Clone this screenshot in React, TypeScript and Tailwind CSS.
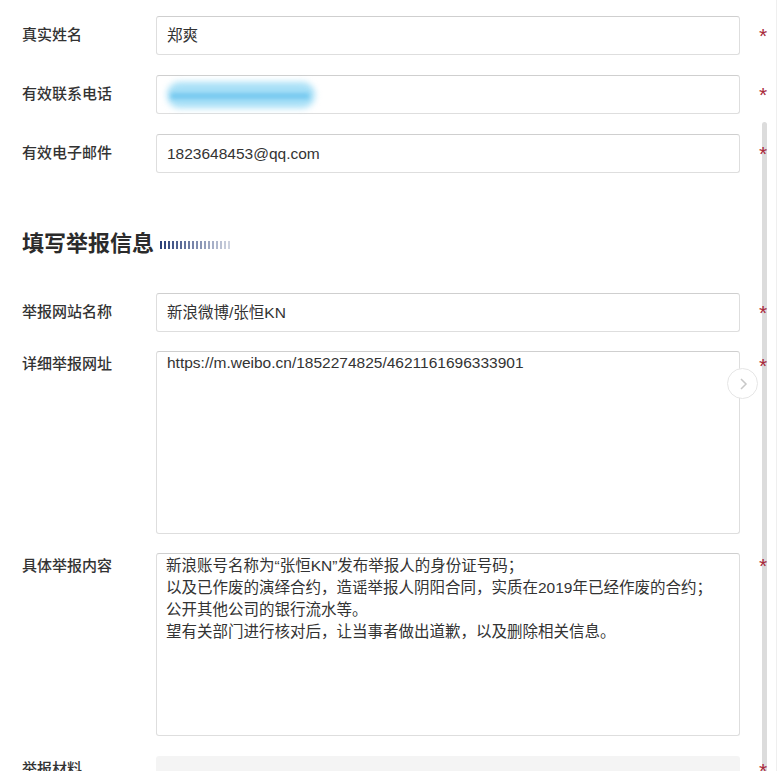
import React from 'react';

const font = { fontFamily: '"Liberation Sans", "Noto Sans CJK SC", sans-serif' };

const Star: React.FC = () => (
  <span className="w-[40px] pl-[19px] text-[21px] leading-none text-[#a8283a] relative z-10">*</span>
);

const Label: React.FC<{ children: React.ReactNode; top?: boolean }> = ({ children, top }) => (
  <div className={`w-[156px] shrink-0 pl-[22px] text-[15px] font-medium text-[#333] ${top ? 'pt-[2px]' : ''}`}>{children}</div>
);

const inputBox = 'w-[584px] shrink-0 border border-[#dedede] border-t-[#cfcfcf] rounded-[3px] bg-white text-[15.5px] text-[#333]';

const Row: React.FC<{ label: string; children?: React.ReactNode; className?: string }> = ({ label, children, className }) => (
  <div className={`flex items-center ${className ?? ''}`}>
    <Label>{label}</Label>
    <div className={`${inputBox} h-[39px] flex items-center px-[10px]`}>{children}</div>
    <Star />
  </div>
);

const App: React.FC = () => {
  const stripes = Array.from({ length: 18 }, (_, i) => i);

  return (
    <div className="relative w-[780px] h-[771px] overflow-hidden bg-white" style={font}>
      {/* right edge of the page */}
      <div className="absolute top-0 right-[3px] h-full w-px bg-[#efefef]" />
      {/* scrollbar track */}
      <div className="absolute top-[122px] left-[762px] w-[5px] h-[660px] rounded-full bg-[#dcdcdc]" />

      <div className="pt-[16px]">
        <Row label="真实姓名">郑爽</Row>
        <Row label="有效联系电话" className="mt-[20px]">
          <div className="relative w-[148px] h-[26px]">
            <div className="absolute inset-0 rounded-full bg-[#a8e0f7] blur-[3px]" />
            <div className="absolute left-[4px] right-[6px] top-[11px] h-[6px] bg-[#74c8ef] blur-[2px]" />
          </div>
        </Row>
        <Row label="有效电子邮件" className="mt-[20px]">1823648453@qq.com</Row>

        <div className="flex items-center pl-[22px] mt-[55px] h-[30px]">
          <h2 className="text-[22px] font-bold text-[#2b2b2b]">填写举报信息</h2>
          <div className="flex gap-[2px] ml-[6px] mt-[3px]">
            {stripes.map((i) => (
              <span
                key={i}
                className="w-[2px] h-[8px] bg-[#2a3f78]"
                style={{ opacity: 1 - i * 0.045 }}
              />
            ))}
          </div>
        </div>

        <Row label="举报网站名称" className="mt-[35px]">新浪微博/张恒KN</Row>

        <div className="flex items-start mt-[19px]">
          <Label top>详细举报网址</Label>
          <div className={`${inputBox} h-[183px] px-[10px] py-0 leading-[22px]`}>
            https://m.weibo.cn/1852274825/4621161696333901
          </div>
          <div className="relative">
            <div className="absolute left-[-13px] top-[17px] w-[31px] h-[31px] rounded-full bg-white border border-[#e6e6e6] flex items-center justify-center z-20">
              <svg width="10" height="14" viewBox="0 0 10 14" fill="none" stroke="#c8c8c8" strokeWidth="1.5">
                <path d="M3 2l5 5-5 5" />
              </svg>
            </div>
            <div className="pt-[4px]"><Star /></div>
          </div>
        </div>

        <div className="flex items-start mt-[19px]">
          <Label top>具体举报内容</Label>
          <div className={`${inputBox} h-[183px] px-[9px] py-[1px] leading-[22px]`}>
            <p>新浪账号名称为“张恒KN”发布举报人的身份证号码；</p>
            <p>以及已作废的演绎合约，造谣举报人阴阳合同，实质在2019年已经作废的合约；</p>
            <p>公开其他公司的银行流水等。</p>
            <p>望有关部门进行核对后，让当事者做出道歉，以及删除相关信息。</p>
          </div>
          <div className="pt-[2px]"><Star /></div>
        </div>

        <div className="flex items-start mt-[20px]">
          <Label top>举报材料</Label>
          <div className="w-[584px] h-[60px] rounded-[3px] bg-[#f4f4f4]" />
          <div className="pt-[4px]"><Star /></div>
        </div>
      </div>
    </div>
  );
};

export default App;
